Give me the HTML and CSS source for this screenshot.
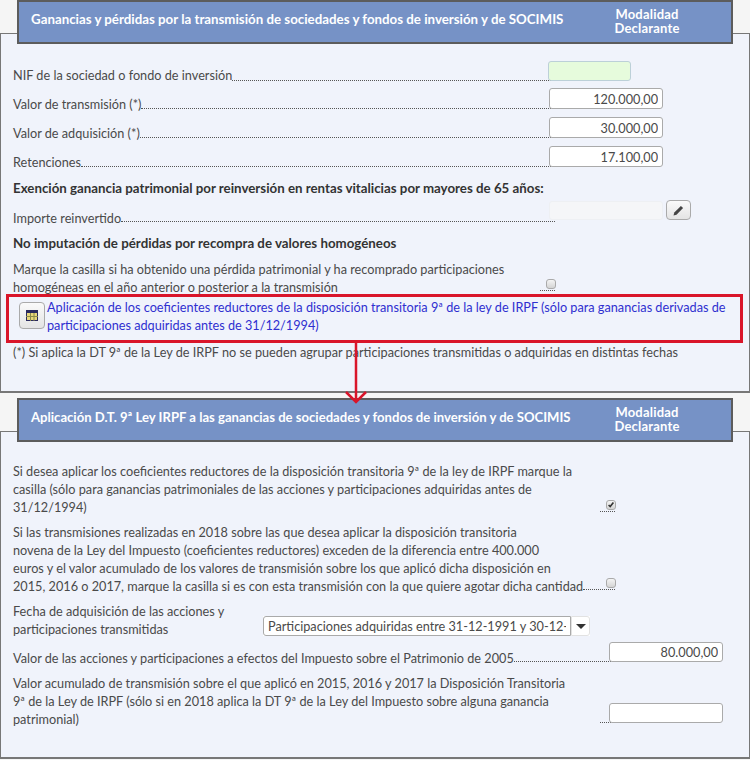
FILE: index.html
```html
<!DOCTYPE html>
<html lang="es">
<head>
    <meta charset="UTF-8">
    <meta name="viewport" content="width=device-width, initial-scale=1.0">
    <title>Ganancias y pérdidas</title>
    <link rel="stylesheet" href="styles.css">
</head>
<body>
    <section class="block first">
        <header class="block-head">
            <h2>Ganancias y pérdidas por la transmisión de sociedades y fondos de inversión y de SOCIMIS</h2>
            <div class="mode">Modalidad<br>Declarante</div>
        </header>
        <div class="panel panel-one">
            <div class="row nif">
                <span class="label">NIF de la sociedad o fondo de inversión</span><span class="leader"></span>
                <div class="slot"><input class="field green" type="text"></div>
            </div>
            <div class="row">
                <span class="label">Valor de transmisión (*)</span><span class="leader"></span>
                <div class="slot"><input class="field" type="text" value="120.000,00"></div>
            </div>
            <div class="row">
                <span class="label">Valor de adquisición (*)</span><span class="leader"></span>
                <div class="slot"><input class="field" type="text" value="30.000,00"></div>
            </div>
            <div class="row">
                <span class="label">Retenciones</span><span class="leader"></span>
                <div class="slot"><input class="field" type="text" value="17.100,00"></div>
            </div>
            <h3 class="sub sub-one">Exención ganancia patrimonial por reinversión en rentas vitalicias por mayores de 65 años:</h3>
            <div class="row reinvest">
                <span class="label">Importe reinvertido</span><span class="leader"></span>
                <div class="slot"><input class="field off" type="text" disabled></div>
                <button class="tool pencil" type="button">
                    <svg width="13" height="13" viewBox="0 0 13 13"><path d="M1.5 11.5l.8-3 6.6-6.6 2.2 2.2-6.6 6.6z" fill="#444"/></svg>
                </button>
            </div>
            <h3 class="sub sub-two">No imputación de pérdidas por recompra de valores homogéneos</h3>
            <div class="row check-row homog">
                <span class="label narrow">Marque la casilla si ha obtenido una pérdida patrimonial y ha recomprado participaciones homogéneas en el año anterior o posterior a la transmisión</span>
                <span class="leader"></span>
                <span class="check"></span>
            </div>
            <div class="callout">
                <button class="tool table" type="button">
                    <svg width="12" height="11" viewBox="0 0 12 11"><rect width="12" height="11" fill="#2b2b5e"/><rect x="1" y="3" width="10" height="7" fill="#e8d77a"/><path d="M0 6.5h12M4.5 3v8M8 3v8" stroke="#8a8a4a" stroke-width="1"/></svg>
                </button>
                <a class="link" href="#">Aplicación de los coeficientes reductores de la disposición transitoria 9ª de la ley de IRPF (sólo para ganancias derivadas de participaciones adquiridas antes de 31/12/1994)</a>
            </div>
            <p class="note">(*) Si aplica la DT 9ª de la Ley de IRPF no se pueden agrupar participaciones transmitidas o adquiridas en distintas fechas</p>
        </div>
        <div class="arrow">
            <svg width="26" height="62" viewBox="0 0 26 62"><path d="M13 0v59M3 49l10 10 10-10" fill="none" stroke="#d9152a" stroke-width="2.5"/></svg>
        </div>
    </section>

    <section class="block second">
        <header class="block-head">
            <h2>Aplicación D.T. 9ª Ley IRPF a las ganancias de sociedades y fondos de inversión y de SOCIMIS</h2>
            <div class="mode">Modalidad<br>Declarante</div>
        </header>
        <div class="panel panel-two">
            <div class="row check-row first-q">
                <span class="label wide">Si desea aplicar los coeficientes reductores de la disposición transitoria 9ª de la ley de IRPF marque la casilla (sólo para ganancias patrimoniales de las acciones y participaciones adquiridas antes de 31/12/1994)</span>
                <span class="leader"></span>
                <span class="check">
                    <svg width="10" height="10" viewBox="0 0 10 10"><path d="M2 5l2 2 4-5" fill="none" stroke="#333" stroke-width="2"/></svg>
                </span>
            </div>
            <div class="row check-row second-q">
                <span class="label">Si las transmisiones realizadas en 2018 sobre las que desea aplicar la disposición transitoria<br>novena de la Ley del Impuesto (coeficientes reductores) exceden de la diferencia entre 400.000<br>euros y el valor acumulado de los valores de transmisión sobre los que aplicó dicha disposición en<br>2015, 2016 o 2017, marque la casilla si es con esta transmisión con la que quiere agotar dicha cantidad</span>
                <span class="leader"></span>
                <span class="check"></span>
            </div>
            <div class="row date-row">
                <span class="label short">Fecha de adquisición de las acciones y participaciones transmitidas</span>
                <div class="combo">
                    <select class="combo-text">
                        <option>Participaciones adquiridas entre 31-12-1991 y 30-12-1992</option>
                    </select>
                    <div class="combo-btn"><span class="caret"></span></div>
                </div>
            </div>
            <div class="row value-row">
                <span class="label">Valor de las acciones y participaciones a efectos del Impuesto sobre el Patrimonio de 2005</span><span class="leader"></span>
                <div class="slot"><input class="field" type="text" value="80.000,00"></div>
            </div>
            <div class="row value-row accum">
                <span class="label wide">Valor acumulado de transmisión sobre el que aplicó en 2015, 2016 y 2017 la Disposición Transitoria<br>9ª de la Ley de IRPF (sólo si en 2018 aplica la DT 9ª de la Ley del Impuesto sobre alguna ganancia<br>patrimonial)</span><span class="leader"></span>
                <div class="slot"><input class="field" type="text"></div>
            </div>
        </div>
    </section>
</body>
</html>
```

FILE: styles.css
```css
* {
    box-sizing: border-box;
}

body {
    font-family: "Lato", "Open Sans", sans-serif;
    font-size: 12.7px;
    line-height: 18px;
    background-color: #f5f5f5;
    color: #4a4a4a;
    margin: 0;
    width: 750px;
    height: 760px;
    overflow: hidden;
}

.block {
    position: relative;
}

.second {
    margin-top: 5px;
}

.block-head {
    position: relative;
    display: flex;
    align-items: center;
    margin-left: 17px;
    width: 716px;
    height: 44px;
    background-color: #7692c6;
    border: 2px solid #5c5c5c;
    color: #fff;
}

.block-head h2 {
    flex: 1;
    margin: 0;
    padding: 0 0 6px 12px;
    font-size: 13.3px;
    font-weight: 700;
}

.second h2 {
    font-size: 13.1px;
}

.mode {
    width: 130px;
    margin-right: 19px;
    padding-bottom: 3px;
    text-align: center;
    font-size: 13px;
    font-weight: 700;
    line-height: 14px;
    letter-spacing: 0.2px;
}

.panel {
    margin-top: -11px;
    width: 750px;
    background-color: #f0f3fb;
    border: 1px solid #777;
    border-bottom-width: 2px;
    padding-left: 12px;
    padding-right: 10px;
}

.panel-one {
    height: 360px;
    padding-top: 27px;
}

.panel-two {
    height: 328px;
    padding-top: 30px;
}

.row {
    display: flex;
    align-items: flex-end;
    margin-bottom: 8px;
}

.label {
    flex: none;
    margin-bottom: -4px;
}

.nif {
    margin-bottom: 7px;
}

.nif .label {
    margin-bottom: -3px;
}

.narrow {
    width: 527px;
}

.wide {
    width: 587px;
}

.short {
    width: 250px;
}

.leader {
    flex: 1;
    border-bottom: 1px dotted #555;
    min-width: 0;
}

.slot {
    flex: none;
    width: 114px;
    margin-left: -6px;
    margin-right: 76px;
}

.field {
    display: block;
    width: 100%;
    height: 21px;
    padding: 0 4px;
    font: inherit;
    color: #4a4a4a;
    text-align: right;
    background: #fff;
    border: 1px solid #aaa;
    border-radius: 3px;
    outline: none;
}

.green {
    width: 83px;
    height: 20px;
    margin-left: -1px;
    background: #e6fbdc;
    border-color: #bcd0d8;
}

.off {
    height: 19px;
    background: #f5f6f8;
    border-color: #eef0f3;
}

.tool {
    display: flex;
    align-items: center;
    justify-content: center;
    flex: none;
    padding: 0;
    background: linear-gradient(#fafafa, #e4e4e4);
    border: 1px solid #aaa;
    border-radius: 4px;
}

.reinvest {
    padding-right: 48px;
}

.reinvest .label {
    margin-bottom: -5px;
}

.reinvest .slot {
    margin-right: 3px;
    margin-bottom: 2px;
}

.pencil {
    width: 25px;
    height: 20px;
    margin-bottom: 2px;
}

.sub {
    margin: 0;
    font-size: 13.3px;
    font-weight: 700;
    color: #333;
}

.sub-one {
    margin-top: 12px;
    margin-bottom: 3px;
}

.sub-two {
    margin-top: 12px;
    margin-bottom: 8px;
}

.check-row .label {
    margin-bottom: -5px;
}

.check {
    flex: none;
    display: flex;
    align-items: center;
    justify-content: center;
    width: 10px;
    height: 10px;
    margin-left: -9px;
    margin-right: 183px;
    margin-bottom: 2px;
    background: linear-gradient(#f4f4f4, #d4d4d4);
    border: 1px solid #aaa;
    border-radius: 3px;
}

.homog {
    margin-bottom: 3px;
}

.callout {
    display: flex;
    align-items: flex-start;
    margin-left: -7px;
    width: 737px;
    height: 49px;
    padding: 1px 0 0 10px;
    border: 3px solid #d9152a;
}

.table {
    width: 26px;
    height: 27px;
    margin: 4px 2px 0 0;
}

.link {
    color: #2f2fd0;
    text-decoration: none;
}

.note {
    margin: 0;
}

.arrow {
    position: absolute;
    left: 343px;
    top: 343px;
    z-index: 2;
}

.first-q {
    margin-bottom: 11px;
}

.first-q .label {
    margin-bottom: -4px;
}

.first-q .check,
.second-q .check {
    margin-right: 123px;
}

.second-q {
    margin-bottom: 12px;
}

.date-row {
    margin-bottom: 6px;
}

.date-row .label {
    margin-bottom: -2px;
}

.combo {
    display: flex;
    height: 20px;
    width: 327px;
    background: #fff;
}

.combo-text {
    width: 308px;
    height: 20px;
    padding: 0 4px;
    font: inherit;
    color: #4a4a4a;
    background: #fff;
    appearance: none;
    border: 1px solid #aaa;
    border-radius: 3px 0 0 3px;
    outline: none;
}

.combo-btn {
    flex: 1;
    display: flex;
    align-items: center;
    justify-content: center;
    border: 1px solid #e2e2e2;
    border-radius: 0 3px 3px 0;
}

.caret {
    width: 0;
    height: 0;
    border-left: 5px solid transparent;
    border-right: 5px solid transparent;
    border-top: 5px solid #333;
}

.value-row {
    margin-bottom: 12px;
}

.value-row .label {
    margin-bottom: -5px;
}

.value-row .slot {
    margin-right: 16px;
}

.value-row .field {
    height: 20px;
}
```
